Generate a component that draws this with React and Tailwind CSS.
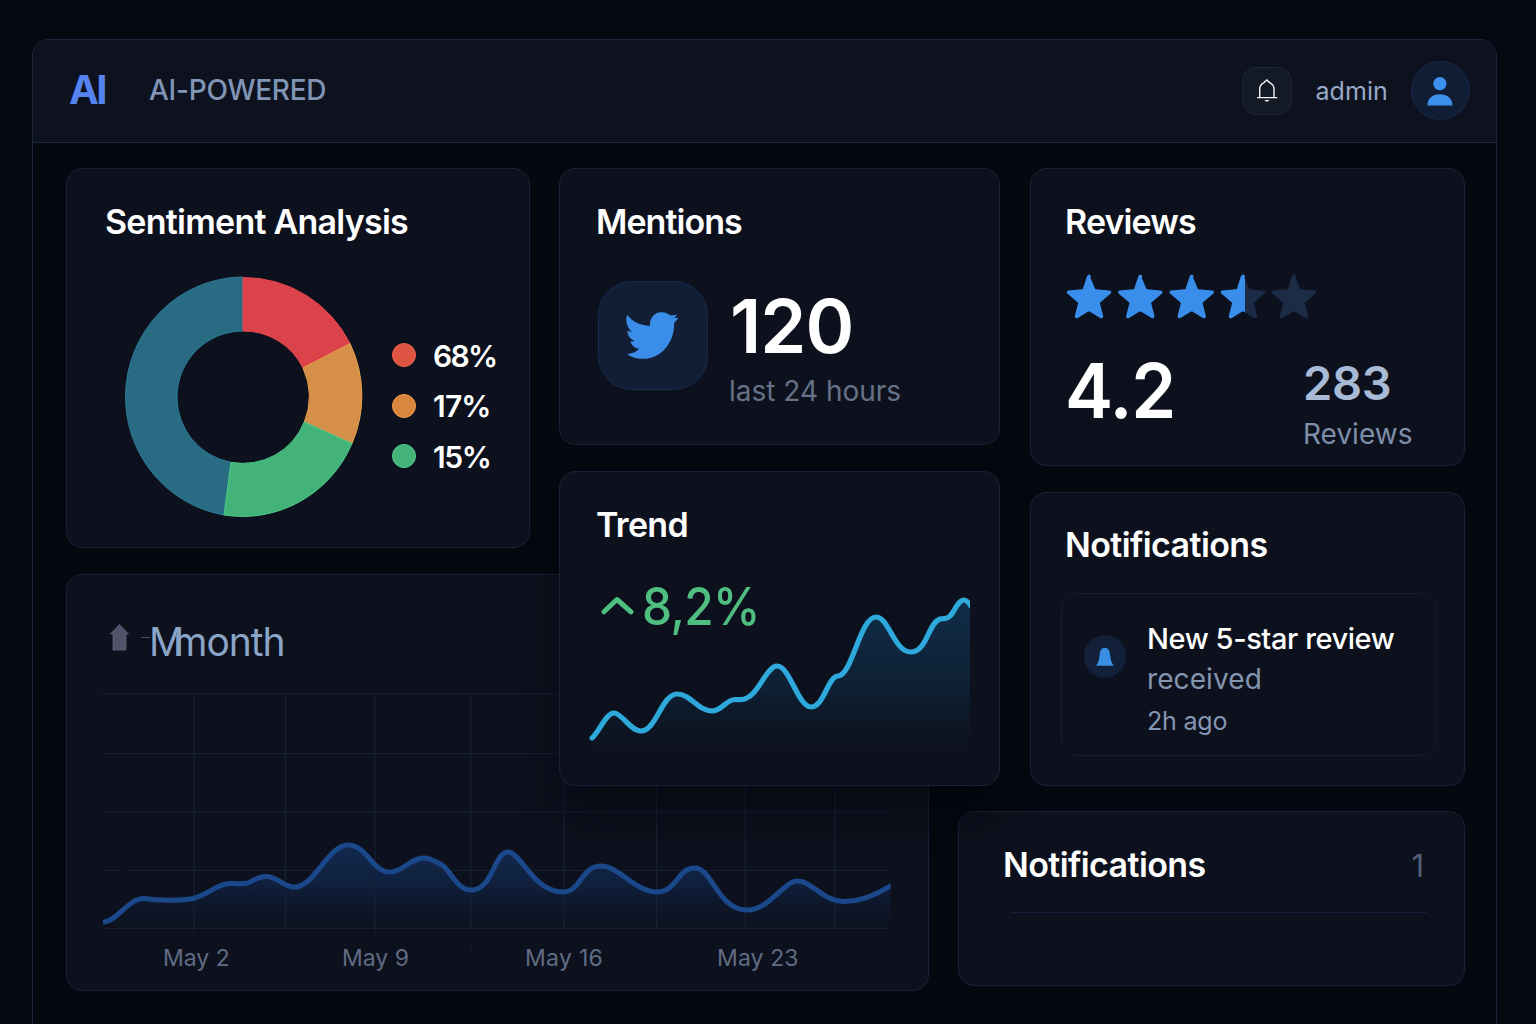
const STAR =
  "M23 3.2 28.4 16.1Q28.8 17 29.8 17.1L43.4 18.2Q45.4 18.7 43.9 20.3L33.7 29Q33 29.7 33.2 30.7L36.4 43Q36.5 45.2 34.6 44.3L24 37.9Q23 37.4 22 37.9L11.4 44.3Q9.5 45.2 9.6 43L12.8 30.7Q13 29.7 12.3 29L2.1 20.3Q.6 18.7 2.6 18.2L16.2 17.1Q17.2 17 17.6 16.1L21.7 3.6Q23 1 24.3 3.6Z";

function Card({ className, children }) {
  return (
    <section className={`rounded-2xl border border-[#172238] bg-[#0d111d] ${className}`}>{children}</section>
  );
}

function Title({ className, children }) {
  return <h2 className={`text-[34px] leading-none font-semibold whitespace-nowrap text-white ${className}`}>{children}</h2>;
}

function Header() {
  return (
    <header className="flex h-[103px] items-center justify-between border-b border-[#1a2840] bg-[#0d121e] pr-[26px] pl-9">
      <div className="flex items-center gap-11 pb-[1.5px]">
        <span className="w-9 text-[40px] leading-none font-bold tracking-[-2.5px] text-[#5583ef]">AI</span>
        <span className="text-[28px] leading-none font-medium tracking-[-0.25px] text-[#8196b7]">AI-POWERED</span>
      </div>
      <div className="flex items-center pb-px">
        <button className="flex h-[48px] w-[50px] items-center justify-center rounded-[14px] border border-[#1c273b] bg-[#131925]">
          <svg width="24" height="26" viewBox="0 0 24 26" fill="none" stroke="#f1f5f9" strokeWidth="1.4">
            <path d="M4.7 19V10.6Q5 6.6 9 4.6L11.8 2 14.6 4.6Q18.7 6.6 19 10.6V19" />
            <path d="M2 19.6H22.3" />
            <path d="M9.5 21.9H14.3L13 23.4H10.8Z" fill="#f1f5f9" stroke="none" />
          </svg>
        </button>
        <span className="mt-px ml-[23px] text-[25px] leading-none tracking-[0.1px] text-[#98a9c9]">admin</span>
        <span className="ml-[23px] flex size-[59px] items-center justify-center rounded-full border border-[#16284a] bg-[#111d35]">
          <svg width="28" height="32" viewBox="0 0 28 32" fill="#3c91ee">
            <circle cx="12.9" cy="8.6" r="6.6" />
            <path d="M.4 30.4C.4 23.5 5.5 19.3 12.9 19.3S25.4 23.5 25.4 30.4Z" />
          </svg>
        </span>
      </div>
    </header>
  );
}

function Donut() {
  return (
    <svg width="240" height="242" viewBox="124 276 240 242" className="ml-[20px] shrink-0">
      <g strokeWidth="1">
        <path d="M224 515A118.500 120 0 0 1 125.500 396.500A118 120 0 0 1 243 277V331A66 66 0 0 0 177 397A66 66 0 0 0 231 462.3Z" fill="#286b82" stroke="#2b7c97" />
        <path d="M243 277.500A119 120 0 0 1 350 343.5L303 368A66 66 0 0 0 243 331Z" fill="#dc4249" stroke="#ea4950" />
        <path d="M350 343.5A119 120 0 0 1 352 443.5L304.3 422A66 66 0 0 0 303 368Z" fill="#d68f48" stroke="#eda24b" />
        <path d="M352 443.5A119 120 0 0 1 224 515L231 462.3A66 66 0 0 0 304.3 422Z" fill="#43b37a" stroke="#4bcb87" />
      </g>
    </svg>
  );
}

const legend = [
  ["68%", "bg-[#dd5542] border-[#f0614b]", "tracking-[-1.7px]"],
  ["17%", "bg-[#d9863f] border-[#f19a48]", "tracking-[-0.8px]"],
  ["15%", "bg-[#43b37a] border-[#4fd38d]", "tracking-[-1.4px]"],
];

function Sentiment() {
  return (
    <Card className="col-start-1 row-start-1 row-end-6 pt-[36px] pl-[37px]">
      <Title className="ml-px tracking-[-0.75px]">Sentiment Analysis</Title>
      <div className="mt-[37px] flex">
        <Donut />
        <ul className="mt-[64.5px] ml-[28px] flex flex-col gap-[20.5px]">
          {legend.map(([v, dot, track]) => (
            <li key={v} className="flex h-[30px] items-center gap-[17px]">
              <span className={`-mt-px size-6 rounded-full border ${dot}`} />
              <span className={`text-[30px] leading-none font-semibold text-white ${track}`}>{v}</span>
            </li>
          ))}
        </ul>
      </div>
    </Card>
  );
}

function Mentions() {
  return (
    <Card className="col-start-3 col-end-6 row-start-1 pt-[36px] pl-[35px]">
      <Title className="ml-px tracking-[-0.95px]">Mentions</Title>
      <div className="mt-[42px] ml-[3px] flex">
        <div className="flex h-[109px] w-[110px] items-center justify-center rounded-[34px] border border-[#162d50] bg-[#111e36]">
          <svg width="54" height="50" viewBox="0 0 54 50" fill="#3a8ee9" className="-ml-0.5">
            <path d="M2.1 3.9C7.6 10.5 15 14.1 24.9 14.9C24.5 7.4 29.3 1.6 36 1.3C40.2 1.1 43 2.6 45.3 4.6C47.2 4.4 49.2 3.8 51.6 3.4C51.2 5.1 50.4 6 49.4 7C50.7 7 52 7 53.2 6.8C52.4 8.9 50.7 10.3 49.1 11.8C49.8 31.4 36 48.5 17.5 47.8C11.4 47.6 5.5 46 2.2 42.9C7 42.9 11.5 40.7 14.2 37.7C9.6 37.4 6.4 34 5.4 30.3C7 30.7 8.6 30.5 9.7 30C5.4 28.4 2.5 24.8 2.4 19.6C3.8 20.5 5.4 21 7 21C2.6 17 -.1 10.5 2.1 3.9Z" />
          </svg>
        </div>
        <div className="mt-[8px] ml-[20px]">
          <div className="ml-0.5 h-[74px] text-[74px] leading-none font-semibold tracking-[-1px] text-white">120</div>
          <div className="mt-[14px] ml-px text-[28px] leading-none text-[#667286]">last 24 hours</div>
        </div>
      </div>
    </Card>
  );
}

function Stars() {
  return (
    <svg width="256" height="47" viewBox="0 0 256 47" className="mt-[34px] ml-[2px]">
      <defs>
        <clipPath id="half"><rect width="25" height="47" /></clipPath>
      </defs>
      {[0, 51.3, 102.7, 154, 205].map((x, i) => (
        <g key={x} transform={`translate(${x} 0)`} strokeWidth="1.500" strokeLinejoin="round">
          <path d={STAR} fill={i < 3 ? "#398eec" : "#1c2b46"} stroke={i < 3 ? "#398eec" : "#1c2b46"} />
          {i === 3 && <path d={STAR} fill="#398eec" stroke="#398eec" clipPath="url(#half)" />}
        </g>
      ))}
    </svg>
  );
}

function Reviews() {
  return (
    <Card className="col-start-7 row-start-1 row-end-3 pt-[36px] pl-[33px]">
      <Title className="ml-px tracking-[-0.87px]">Reviews</Title>
      <Stars />
      <div className="mt-[32px] flex">
        <div className="ml-px h-[76px] w-[236px] origin-left scale-x-[0.95] text-[76px] leading-none font-semibold tracking-[-1.3px] text-white">4.2</div>
        <div className="mt-[7px] ml-0.5">
          <div className="text-[47px] leading-none font-semibold tracking-[-0.3px] text-[#a9bad7]">283</div>
          <div className="mt-[13.5px] text-[28px] leading-none text-[#7f8ea9]">Reviews</div>
        </div>
      </div>
    </Card>
  );
}

function Trend() {
  const line =
    "M3 143C10 137 17 118 25 118S41 136 52 136C67 136 73 99 88 99C102 99 109 116 123 116C133 116 137 104.500 146 104.500C153 104.500 155 105.500 161 101C171 94 179 71 188 71C201 71 209 112 222 112C235 112 239 81 249 81C263 81 271 22 287 22C300 22 305 57 322 57C338 57 339 28 351 24C355 23 357 25 361 21C366 16 369 5 375 5C378 5 380 8 382 11";
  return (
    <Card className="z-10 col-start-3 col-end-6 row-start-4 row-end-8 pt-[36px] pl-[29px] shadow-[0_28px_40px_-6px_rgba(2,5,12,0.6)]">
      <Title className="ml-[7px] tracking-[-0.67px]">Trend</Title>
      <div className="mt-[38px] ml-[11px] flex">
        <svg width="34" height="24" viewBox="0 0 34 24" fill="none" stroke="#4fbf80" strokeWidth="5" strokeLinecap="round" strokeLinejoin="round" className="mt-[15px]">
          <path d="M4 16.800 17 4.500 31 16.800" />
        </svg>
        <span className="ml-[8px] origin-left scale-x-[0.91] text-[52.5px] leading-none font-medium tracking-[-0.7px] text-[#50be81]">8,2%</span>
      </div>
      <svg width="382" height="185" viewBox="0 0 382 185" className="-mt-[37.5px]">
        <defs>
          <linearGradient id="trendFill" x1="0" y1="0" x2="0" y2="1">
            <stop offset="0" stopColor="#11304f" stopOpacity=".9" />
            <stop offset=".5" stopColor="#0f2a42" stopOpacity=".6" />
            <stop offset=".88" stopColor="#0e1c2c" stopOpacity="0" />
          </linearGradient>
          <clipPath id="trendClip"><rect width="381" height="185" /></clipPath>
        </defs>
        <g clipPath="url(#trendClip)">
          <path d={`${line}V185H1Z`} fill="url(#trendFill)" />
          <path d={line} fill="none" stroke="#2ea9dc" strokeWidth="5.200" strokeLinecap="round" />
        </g>
      </svg>
    </Card>
  );
}

function Notifications() {
  return (
    <Card className="col-start-7 row-start-5 row-end-8 pt-[35px] pl-[30px]">
      <Title className="ml-[4px] tracking-[-0.61px]">Notifications</Title>
      <div className="mt-[31px] flex h-[163px] w-[376px] rounded-[17px] border border-[#141c2e] pl-[22px]">
        <div className="mt-[41px] flex h-[43px] w-[42px] items-center justify-center rounded-full bg-[#12203a]">
          <svg width="20" height="20" viewBox="0 0 20 20" fill="#388fe3">
            <path d="M1 18.700Q3.500 16.500 4.400 10C5 4.500 5.500 .8 9.800 .8S14.700 4.500 15.400 10Q16.200 16.500 19 18.700Z" />
          </svg>
        </div>
        <div className="mt-[30px] ml-[21px] whitespace-nowrap">
          <p className="text-[29px] leading-none font-medium tracking-[-0.41px] text-white">New 5-star review</p>
          <p className="mt-[12px] text-[28px] leading-none tracking-[0.1px] text-[#8495b0]">received</p>
          <p className="mt-[15.5px] text-[25px] leading-none tracking-[-0.2px] text-[#8596b2]">2h ago</p>
        </div>
      </div>
    </Card>
  );
}

function Month() {
  const line =
    "M4 232C17 231 29 208 44 208.500C58 210.500 80 211 93 208.500C108 205 117 193.500 130 193.500C136 193.500 141 194 147 193.200C153 191 158 186.500 166 186.500C178 186.500 183 197 194 197C215 197 228 155 248 155C267 155 272 182 290 182C303 182 310 168 324 168C331 168 336 172 342 175C351 181 357 200 371 200C393 200 394 162 408 162C421 162 433 202 463 202C481 202 481 176 501 176C519 176 535 202 557 202C577 202 577 178 595 178C612 178 618 220 647 220C670 220 683 191 698 191C712 191 723 212 745 211.500C762 211 776 205 791 195.500";
  const columns = [94, 185.5, 275, 371, 464, 556.5, 645, 735];
  return (
    <Card className="col-start-1 col-end-4 row-start-7 row-end-11 pt-[46px] pl-[33px]">
      <div className="flex items-start">
        <svg width="20" height="28" viewBox="0 0 20 28" className="mt-[2px] ml-[9px]">
          <path d="M10.500 1.500 19.500 11H17V27H4V11H1.500Z" fill="#50536a" stroke="#646a80" strokeWidth=".7" />
        </svg>
        <span className="mt-[16px] ml-[12px] h-px w-[9px] bg-[#465067]" />
        <h2 className="mt-px -ml-px h-[38px] text-[39px] leading-none tracking-[-1px] text-[#8ba5c9]">
          <span className="tracking-[-11px]">M</span>month
        </h2>
      </div>
      <svg width="795" height="262" viewBox="0 0 795 262" className="mt-[30px]">
        <defs>
          <linearGradient id="monthFill" x1="0" y1="0" x2="0" y2="1">
            <stop offset="0" stopColor="#122c55" stopOpacity=".9" />
            <stop offset=".45" stopColor="#10264a" stopOpacity=".75" />
            <stop offset="1" stopColor="#0e1830" stopOpacity=".1" />
          </linearGradient>
          <clipPath id="monthClip"><rect x="3" width="787.500" height="262" /></clipPath>
        </defs>
        <g clipPath="url(#monthClip)">
          <path d={`${line}V238H4Z`} fill="url(#monthFill)" />
        </g>
        <g stroke="#162036" strokeWidth="1.200">
          <path d="M0 4H793M5 63.500H793M5 122H793M4 180.500H20M28 180.500H789M3 238.500H790" />
          {columns.map((x) => <path key={x} d={`M${x} 4V238`} />)}
          <path d="M94 240V246M275 240V246M371 254V262" strokeOpacity=".7" />
        </g>
        <g clipPath="url(#monthClip)">
          <path d={line} fill="none" stroke="#1b488b" strokeWidth="5" strokeLinecap="square" />
        </g>
      </svg>
      <div className="-mt-[5px] ml-[63px] flex text-[23px] leading-none whitespace-nowrap text-[#606c84]">
        <span className="w-[179px]">May 2</span>
        <span className="w-[183px]">May 9</span>
        <span className="w-[192px] tracking-[0.3px]">May 16</span>
        <span className="tracking-[0.1px]">May 23</span>
      </div>
    </Card>
  );
}

function NotificationCount() {
  return (
    <Card className="col-start-5 col-end-8 row-start-9 row-end-10 pt-[36px] pr-[37px] pl-[44px]">
      <div className="flex items-start justify-between">
        <Title className="tracking-[-0.61px]">Notifications</Title>
        <span className="mt-[2px] mr-[3px] text-[31px] leading-none text-[#525e77]">1</span>
      </div>
      <div className="mt-[30px] ml-[8px] h-px bg-[#15203a]" />
    </Card>
  );
}

export default function App() {
  return (
    <div className="h-[1024px] w-[1536px] overflow-hidden bg-[#050911] px-8 pt-[39px] font-['Inter',sans-serif] antialiased">
      <div className="h-[1040px] w-[1465px] overflow-hidden rounded-t-2xl border border-[#1a2840] bg-[#04080f]">
        <Header />
        <main className="ml-[33px] grid grid-cols-[464px_29px_370px_29px_42px_30px_435px] grid-rows-[277px_21px_5px_21px_56px_26px_212px_25px_175px_5px] pt-[25px]">
          <Sentiment />
          <Mentions />
          <Reviews />
          <Trend />
          <Notifications />
          <Month />
          <NotificationCount />
        </main>
      </div>
    </div>
  );
}
